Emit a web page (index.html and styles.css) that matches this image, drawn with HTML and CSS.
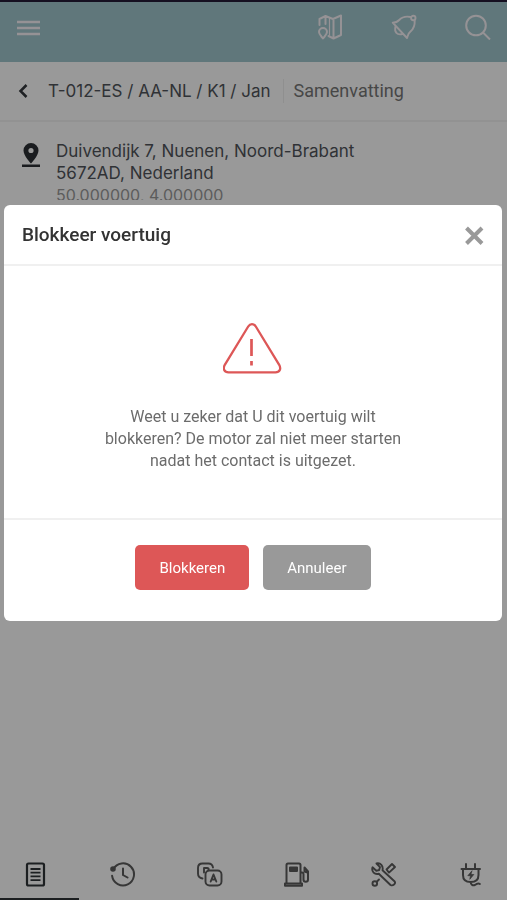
FILE: index.html
```html
<!DOCTYPE html>
<html lang="nl">
<head>
<meta charset="utf-8">
<meta name="viewport" content="width=device-width, initial-scale=1">
<title>Blokkeer voertuig</title>
<link rel="stylesheet" href="styles.css">
</head>
<body>
<div class="app">
  <header class="topbar">
    <button class="icon-button" aria-label="Menu">
      <svg width="24" height="24" viewBox="0 0 24 24" fill="none" stroke="currentColor" stroke-width="2.400"><path d="M1 7h23M1 13h23M1 19h23"/></svg>
    </button>
    <div class="topbar-actions">
      <button class="icon-button" aria-label="Kaart">
        <svg width="26" height="26" viewBox="0 0 26 26" fill="none" stroke="currentColor" stroke-width="2" stroke-linejoin="round" stroke-linecap="round"><path d="M2.500 11V5l6-3 7.500 3L24 1.500v19.500L16.500 24.500l-5-2.500M8.500 2v8M16.500 5v19.500"/><path stroke-width="1.200" d="M12.500 4v17"/><path d="M6 24.500c-2-2.500-4-4.200-4-6.500a4 4 0 0 1 8 0c0 2.300-2 4-4 6.500z"/></svg>
      </button>
      <button class="icon-button" aria-label="Meldingen">
        <svg width="26" height="26" viewBox="0 0 26 26" fill="none" stroke="currentColor" stroke-width="1.900" stroke-linejoin="round" stroke-linecap="round"><path d="M19.700 3C15 2 11 3 8.200 6 6.200 8.200 4.700 8.700 1.700 8.700L16 24c1-3 1-4.500 3.500-6.500 3-2.500 4.500-5.500 4.200-11"/><circle cx="22.300" cy="4" r="2.200"/><path d="M4.500 12.500c-1.500 5.500 1.500 9 7 7.500"/></svg>
      </button>
      <button class="icon-button" aria-label="Zoeken">
        <svg width="26" height="26" viewBox="0 0 26 26" fill="none" stroke="currentColor" stroke-width="2"><circle cx="11" cy="11.500" r="9.800"/><path d="M18 18.500l7 7"/></svg>
      </button>
    </div>
  </header>
  <div class="title-row">
    <button class="icon-button back" aria-label="Terug">
      <svg width="12" height="16" viewBox="0 0 12 16" fill="none" stroke="currentColor" stroke-width="2.500"><path d="M8.500 2L2.500 8l6 6"/></svg>
    </button>
    <h1 class="vehicle">T-012-ES / AA-NL / K1 / Jan</h1>
    <span class="section">Samenvatting</span>
  </div>
  <main class="content">
    <svg class="pin" width="20" height="26" viewBox="0 0 20 26" aria-hidden="true"><path fill="currentColor" fill-rule="evenodd" d="M11 0a7.500 7.500 0 0 0-7.500 7.500C3.500 12.800 11 20.500 11 20.500s7.500-7.700 7.500-13A7.500 7.500 0 0 0 11 0zm0 4.900a2.600 2.600 0 1 1 0 5.200 2.600 2.600 0 0 1 0-5.200zM2 21.500h18V24H2z"/></svg>
    <div class="location">
      <p class="address">Duivendijk 7, Nuenen, Noord-Brabant<br>5672AD, Nederland</p>
      <p class="coordinates">50.000000, 4.000000</p>
    </div>
  </main>
  <nav class="tabs">
    <button class="tab active" aria-label="Samenvatting">
      <svg width="26" height="26" viewBox="0 0 26 26" fill="none" stroke="currentColor" stroke-width="2.200"><rect x="4" y="2.500" width="17" height="22" rx="1.500"/><path stroke-width="1.800" d="M7.500 8h10M7.500 11.700h10M7.500 15.400h10M7.500 19.100h10"/></svg>
    </button>
    <button class="tab" aria-label="Geschiedenis">
      <svg width="26" height="26" viewBox="0 0 26 26" fill="none" stroke="currentColor" stroke-width="2" stroke-linecap="round"><path d="M3.300 8.200a11 11 0 1 1-1.200 6.600M13 7.500v6.500l4.500 2.500"/><circle cx="3" cy="8" r="1.800" fill="currentColor"/></svg>
    </button>
    <button class="tab" aria-label="Privé of zakelijk">
      <svg width="26" height="26" viewBox="0 0 26 26" fill="none" stroke="currentColor" stroke-width="1.900" stroke-linecap="round" stroke-linejoin="round"><path d="M5.500 17.500C2.500 17 1 15.500 1 12.500V7c0-3 1.500-4.500 4.500-4.500h6c2.500 0 4 1.200 4.500 4"/><path d="M7 11.500V7h3c1.500 0 2 1 1.500 2"/><rect x="8.500" y="9.500" width="16" height="15" rx="4"/><path d="M13.700 20.500l2.800-7 2.800 7M14.700 18.500h3.600"/></svg>
    </button>
    <button class="tab" aria-label="Brandstof">
      <svg width="26" height="26" viewBox="0 0 26 26" fill="none" stroke="currentColor" stroke-width="2" stroke-linejoin="round" stroke-linecap="round"><path d="M2.500 22V4c0-1 .5-1.500 1.500-1.500h11c1 0 1.500.5 1.500 1.500v18M1 24.700V22.500h17v2.200zM17 11.500h1c1 0 1.500.7 1.500 2v5c0 3 4.500 3 4.500 0v-8L20.500 6.500M20.500 7V10.500l3 1"/><path d="M6 6.500h7v3.500h-7z" fill="currentColor"/></svg>
    </button>
    <button class="tab" aria-label="Onderhoud">
      <svg width="26" height="26" viewBox="0 0 26 26" fill="none" stroke="currentColor" stroke-width="1.900" stroke-linejoin="round" stroke-linecap="round"><path d="M5.500 2.500l3.500 3.600-.8 2.900-2.900.8L1.500 6.300c-1.200 4.500 2 7.500 6.300 6.500L19.500 24c2.500 1.300 5.500-1.200 4.200-3.500L11.500 9.300C12.500 5 9.500 1.500 5.500 2.500z"/><path d="M15.500 8.500L21 3l3 3-6 5.600zM8 18.500l-2 2"/><circle cx="3.800" cy="22.500" r="2.300"/></svg>
    </button>
    <button class="tab" aria-label="Opladen">
      <svg width="26" height="26" viewBox="0 0 26 26" fill="none" stroke="currentColor" stroke-width="2" stroke-linejoin="round" stroke-linecap="round"><path d="M8 3v4.500M17 3v4.500M3.500 8h18.500M5 8v6c0 4.500 3 7 7.700 7s7.800-2.500 7.800-7V8M12.700 21c0 3 2.200 3.800 4.200 3l2-1.200c1-.5 2-.5 3 .2"/><path d="M13.800 10l-4 4.700h2.700l-.7 3.600 4-4.800h-2.700z" fill="currentColor" stroke-width=".7"/></svg>
    </button>
  </nav>
</div>
<div class="backdrop">
  <section class="modal" role="dialog" aria-modal="true" aria-labelledby="dialog-title">
    <header class="modal-header">
      <h2 id="dialog-title">Blokkeer voertuig</h2>
      <button class="icon-button close" aria-label="Sluiten">
        <svg width="20" height="20" viewBox="0 0 20 20" fill="none" stroke="currentColor" stroke-width="4"><path d="M2.500 3l15.500 15.500M18 3L2.500 18.500"/></svg>
      </button>
    </header>
    <div class="modal-body">
      <svg width="60" height="52" viewBox="0 0 60 52" fill="none" stroke="currentColor" stroke-width="2.300" aria-hidden="true"><path d="M25.200 4.500 1.800 42.800C-.5 47 1.500 50.300 5.500 50.300h47c4 0 6-3.300 3.700-7.500L32.800 4.500c-2-3.300-5.600-3.300-7.600 0z"/><path stroke-width="2.700" d="M28.500 17v17M28.500 39v4.500"/></svg>
      <p>Weet u zeker dat U dit voertuig wilt blokkeren? De motor zal niet meer starten nadat het contact is uitgezet.</p>
    </div>
    <footer class="modal-footer">
      <button class="button danger">Blokkeren</button>
      <button class="button neutral">Annuleer</button>
    </footer>
  </section>
</div>
</body>
</html>
```
FILE: styles.css
```css
* { box-sizing: border-box; }
body { margin: 0; font-family: Roboto, "Liberation Sans", sans-serif; color: #50545a; background: #fff; }
h1, h2, p { margin: 0; }
button { font: inherit; color: inherit; border: 0; padding: 0; background: none; cursor: pointer; }
svg { display: block; flex: none; }

.app { min-height: 100vh; display: flex; flex-direction: column; overflow: hidden; }
.topbar { height: 62px; padding: 0 16px 10px; border-top: 2px solid #241c38; background: #a0c6cd; color: #f8f4f8; display: flex; align-items: center; justify-content: space-between; }
.topbar-actions { display: flex; gap: 48px; }
.title-row { height: 60px; padding: 0 16px; border-bottom: 2px solid #f4f4f4; display: flex; align-items: center; }
.back { color: #34383c; width: 32px; padding-left: 2px; }
.vehicle { font: 400 17px/24px Inter, sans-serif; color: #50545a; }
.section { margin-left: 12px; padding-left: 10px; border-left: 1px solid #eee; font-size: 18px; line-height: 24px; color: #777; }
.content { flex: 1; padding: 18px 20px; display: flex; align-items: flex-start; gap: 16px; }
.pin { margin-top: 3px; color: #2c3034; }
.location { font: 400 17px/22px Inter, sans-serif; }
.coordinates { color: #999; font-size: 16px; height: 16px; overflow: hidden; }
.tabs { height: 50px; margin: 0 -7px 0 -8px; display: grid; grid-template-columns: repeat(6, 1fr); color: #5c5c5c; }
.tab { display: flex; align-items: center; justify-content: center; border-bottom: 2px solid transparent; }
.tab.active { color: #303438; border-color: #303438; }

.backdrop { position: fixed; inset: 0; padding: 205px 5px 20px 4px; background: rgba(0, 0, 0, .4); }
.modal { background: #fff; border-radius: 6px; overflow: hidden; }
.modal-header { height: 61px; padding: 0 18px; border-bottom: 2px solid #f0f0f0; display: flex; align-items: center; justify-content: space-between; }
.modal-header h2 { font-size: 19px; font-weight: 500; color: #333; }
.close { color: #999; }
.modal-body { padding: 56px 24px 46px; border-bottom: 2px solid #f0f0f0; display: flex; flex-direction: column; align-items: center; gap: 32px; color: #dd5757; }
.modal-body p { max-width: 300px; text-align: center; font-size: 16px; line-height: 22px; color: #6c6c6c; }
.modal-footer { padding: 25px 16px 31px; display: flex; justify-content: center; gap: 14px; }
.button { height: 45px; padding: 0 24px; border-radius: 5px; font-size: 15px; color: #fff; }
.danger { background: #dd5757; }
.neutral { background: #999; }
```
